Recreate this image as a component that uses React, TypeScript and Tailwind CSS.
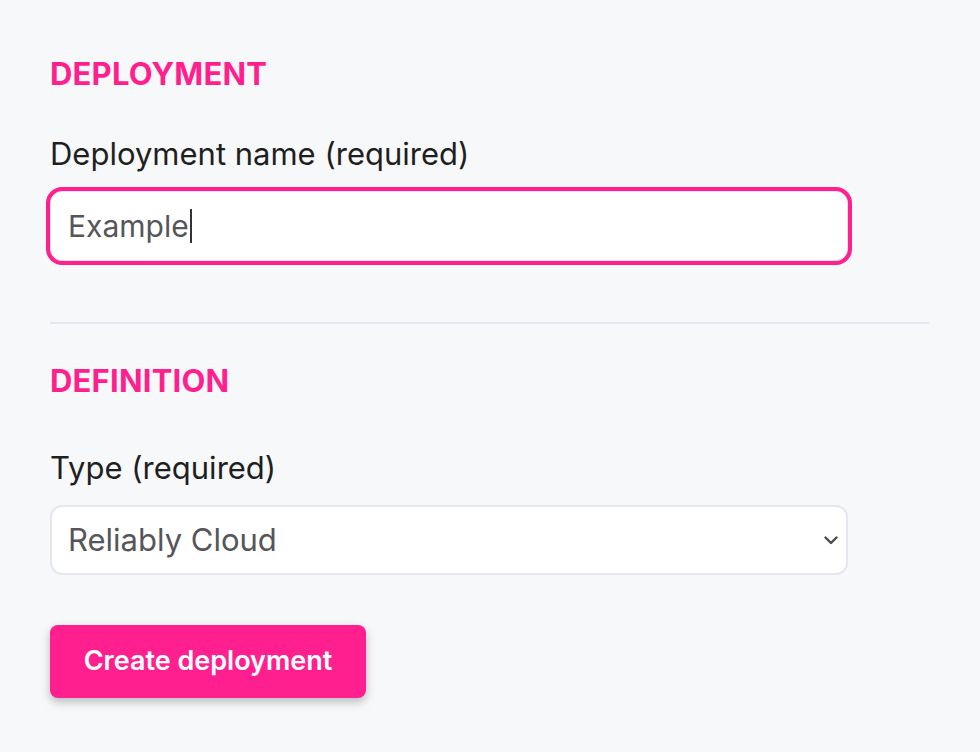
import React from "react";

export default function App() {
  const font = { fontFamily: "Inter, 'Noto Sans', sans-serif" };
  return (
    <div className="min-h-[752px] w-[980px] bg-[#f7f8fa] px-[50px] pt-[55px]" style={font}>
      <h2 className="text-[31px] leading-[38px] font-bold tracking-[0.2px] text-[#ff1f8e]">DEPLOYMENT</h2>
      <label className="mt-[42px] block text-[31px] leading-[38px] text-[#1f1f1f]">Deployment name (required)</label>
      <div className="mt-[18px] w-[798px] h-[70px] rounded-[12px] border border-[#e3e4ea] bg-white shadow-[0_0_0_4px_#ff1f8e] flex items-center pl-[17px]">
        <span className="text-[30px] text-[#55555a]">Example</span>
        <span className="ml-[1px] h-[34px] w-[2px] bg-[#333]" />
      </div>
      <div className="mt-[61px] h-[2px] w-[879px] bg-[#e6e7ee]" />
      <h2 className="mt-[38px] text-[31px] leading-[38px] font-bold tracking-[0.2px] text-[#ff1f8e]">DEFINITION</h2>
      <label className="mt-[49px] block text-[31px] leading-[38px] text-[#1f1f1f]">Type (required)</label>
      <div className="mt-[18px] w-[798px] h-[70px] rounded-[12px] border-2 border-[#e6e7ee] bg-white flex items-center justify-between pl-[16px] pr-[8px]">
        <span className="text-[31px] text-[#55555a]">Reliably Cloud</span>
        <svg width="14" height="9" viewBox="0 0 14 9">
          <path d="M1.5 1.5 L7 7 L12.5 1.5" fill="none" stroke="#4a4a4f" strokeWidth="2.4" strokeLinecap="round" strokeLinejoin="round" />
        </svg>
      </div>
      <button className="mt-[50px] h-[73px] w-[316px] rounded-[8px] bg-[#ff1f8e] text-white text-[27px] font-semibold shadow-[0_4px_10px_rgba(0,0,0,0.25)]">
        Create deployment
      </button>
    </div>
  );
}
